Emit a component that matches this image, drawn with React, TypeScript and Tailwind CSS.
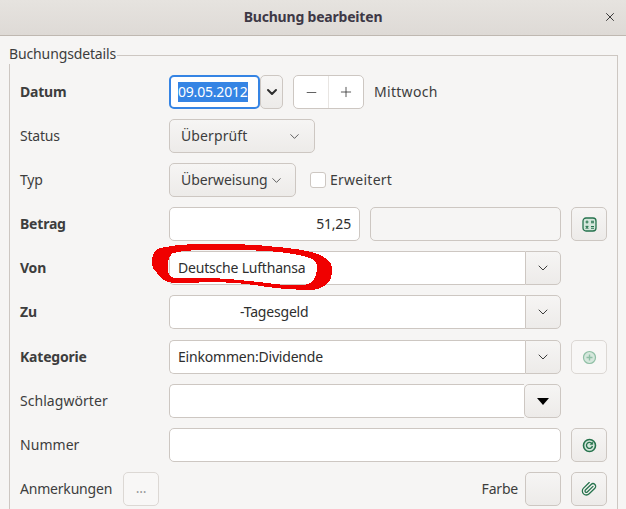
import { ChevronDown, Minus, Plus, X, Paperclip } from 'lucide-react'
import type { ReactNode } from 'react'

const btnBase = "flex items-center h-[34px] rounded-[5px] border border-[#cdc7c2] bg-gradient-to-b from-[#f6f5f4] to-[#edebe9] shrink-0"
const btn = `${btnBase} justify-center`
const entry = "flex items-center h-[34px] rounded-[5px] border border-[#cdc7c2] bg-white text-[#2e2e2e] px-2 pb-[2px]"

function Row({ label, bold, wide, children, className = "" }: { label: string; bold?: boolean; wide?: boolean; children: ReactNode; className?: string }) {
  return (
    <div className={`flex items-center h-[34px] ${className}`}>
      <span className={`w-[149px] shrink-0 pb-[2px] text-[#3d3d3d] ${bold ? "font-bold" : ""} ${wide ? "tracking-[0.05px]" : ""}`}>{label}</span>
      {children}
    </div>
  )
}

function Combo({ text, indent }: { text?: string; indent?: boolean }) {
  return (
    <div className="flex h-[34px] w-[392px] shrink-0">
      <div className={`flex items-center flex-1 pb-[2px] rounded-l-[5px] border border-r-0 border-[#cdc7c2] bg-white text-[#2e2e2e] ${indent ? "pl-[70px]" : "pl-2"}`}>
        {text}
      </div>
      <div className="flex items-center justify-center w-[36px] rounded-r-[5px] border border-[#cdc7c2] bg-gradient-to-b from-[#f6f5f4] to-[#edebe9]">
        <ChevronDown size={16} strokeWidth={1.4} className="text-[#2e2e2e]" />
      </div>
    </div>
  )
}

export default function App() {
  return (
    <div className="h-[509px] w-[626px] overflow-hidden relative bg-[#f6f5f4] text-[14px] font-['Noto_Sans',sans-serif] tracking-[-0.2px]">
      {/* titlebar */}
      <div className="relative flex items-center justify-center h-[36px] pb-[2px] border-b border-[#bfb8b1] bg-gradient-to-b from-[#e6e3df] to-[#dedad6]">
        <span className="font-bold text-[#3d3846]">Buchung bearbeiten</span>
        <X size={14} strokeWidth={1.6} className="absolute right-[9px] top-[10px] text-[#2e2e2e]" />
      </div>

      {/* frame */}
      <div className="relative mt-[19px] ml-[9px] w-[609px] h-[470px] border border-b-0 border-[#cdc7c2] pl-[10px] pt-[19px] pr-[10px]">
        <span className="absolute -left-px -top-[12px] bg-[#f6f5f4] leading-[20px] text-[#3d3d3d] pr-px tracking-[-0.13px]">Buchungsdetails</span>

        <div className="flex flex-col gap-[10px]">
          <Row label="Datum" bold>
            <div className="flex items-center h-[34px] w-[91px] rounded-[5px] border-2 border-[#3584e4] bg-white pl-[7px]">
              <span className="bg-[#3584e4] text-white leading-[20px]">09.05.2012</span>
            </div>
            <div className={`${btn} w-[23px]`}>
              <ChevronDown size={16} strokeWidth={3} className="text-[#2e2e2e]" />
            </div>
            <div className="flex h-[34px] w-[71px] ml-[10px] rounded-[5px] border border-[#cdc7c2] bg-white">
              <div className="flex flex-1 items-center justify-center border-r border-[#e8e5e2]"><Minus size={15} strokeWidth={1.2} className="text-[#2e2e2e]" /></div>
              <div className="flex flex-1 items-center justify-center"><Plus size={16} strokeWidth={1.2} className="text-[#2e2e2e]" /></div>
            </div>
            <span className="ml-[10px] pb-[2px] text-[#3d3d3d] tracking-[0.3px]">Mittwoch</span>
          </Row>

          <Row label="Status">
            <div className={`${btnBase} w-[146px] justify-between pl-[11px] pr-[12px] text-[#3d3d3d]`}>
              <span className="pb-[2px] tracking-[0.1px]">Überprüft</span> <ChevronDown size={15} strokeWidth={1.3} />
            </div>
          </Row>

          <Row label="Typ">
            <div className={`${btnBase} w-[127px] justify-between pl-[11px] pr-[11px] text-[#3d3d3d]`}>
              <span className="pb-[2px] -tracking-[0.1px]">Überweisung</span> <ChevronDown size={15} strokeWidth={1.3} />
            </div>
            <div className="ml-[14px] h-[16px] w-[16px] rounded-[3px] border border-[#cdc7c2] bg-white" />
            <span className="ml-[4px] pb-[2px] text-[#3d3d3d] tracking-[0.25px]">Erweitert</span>
          </Row>

          <Row label="Betrag" bold>
            <div className={`${entry} w-[191px] justify-end`}>51,25</div>
            <div className="ml-[10px] h-[34px] w-[191px] rounded-[5px] border border-[#cdc7c2] bg-[#f6f5f4]" />
            <div className={`${btn} w-[36px] ml-[10px]`}>
              <svg width="15" height="15" viewBox="0 0 15 15" fill="none" stroke="#26734d">
                <rect x="1" y="1" width="13" height="13" rx="3" strokeWidth="1.3" fill="#d5e7dc" />
                <path d="M3.5 5h3M5 3.5v3M9 4.2h3M9 5.8h3M3.7 9l2.6 2.6M6.3 9l-2.6 2.6M9 9.5h3M9 11.2h3" strokeWidth="1.1" />
              </svg>
            </div>
          </Row>

          <Row label="Von" bold><Combo text="Deutsche Lufthansa" /></Row>
          <Row label="Zu" bold><Combo text="-Tagesgeld" indent /></Row>

          <Row label="Kategorie" bold className="mt-px">
            <Combo text="Einkommen:Dividende" />
            <div className="flex items-center justify-center h-[34px] w-[36px] ml-[10px] shrink-0 rounded-[5px] border border-[#dcd8d4] bg-[#f8f7f6]">
              <svg width="15" height="15" viewBox="0 0 15 15" fill="#d5e7dc" stroke="#8fbfa5">
                <circle cx="7.5" cy="7.5" r="6" strokeWidth="1.2" />
                <path d="M7.5 4.5v6M4.5 7.5h6" strokeWidth="1.4" />
              </svg>
            </div>
          </Row>

          <Row label="Schlagwörter" wide>
            <div className="flex h-[34px] w-[392px] shrink-0">
              <div className="flex-1 rounded-l-[5px] border border-r-0 border-[#cdc7c2] bg-white" />
              <div className="flex items-center justify-center w-[37px] rounded-[5px] border border-[#cdc7c2] bg-gradient-to-b from-[#f6f5f4] to-[#edebe9]">
                <svg width="12" height="7" viewBox="0 0 12 7"><path d="M0 0h12L6 7z" fill="#000" /></svg>
              </div>
            </div>
          </Row>

          <Row label="Nummer" wide>
            <div className={`${entry} w-[392px]`} />
            <div className={`${btn} w-[36px] ml-[10px]`}>
              <svg width="15" height="15" viewBox="0 0 15 15" fill="none" stroke="#26734d">
                <circle cx="7.5" cy="7.5" r="6" strokeWidth="1.6" fill="#d5e7dc" />
                <path d="M10 5.8a3 3 0 1 0 .4 2.2" strokeWidth="1.4" />
                <path d="M10.8 3.8v2.8H8z" fill="#26734d" strokeWidth="0.4" />
              </svg>
            </div>
          </Row>

          <div className="flex items-center h-[34px]">
            <span className="w-[103px] shrink-0 pb-[2px] text-[#3d3d3d]">Anmerkungen</span>
            <div className="flex items-center justify-center h-[34px] w-[36px] shrink-0 rounded-[5px] border border-[#dcd8d4] bg-[#f8f7f6] text-[#999] pb-1">...</div>
            <span className="ml-auto mr-[7px] pb-[2px] text-[#3d3d3d]">Farbe</span>
            <div className={`${btn} w-[36px]`} />
            <div className={`${btn} w-[36px] ml-[10px]`}>
              <Paperclip size={16} strokeWidth={1.9} className="text-[#26734d] -scale-x-100 rotate-90" />
            </div>
          </div>
        </div>
      </div>

      {/* red hand-drawn marker over the screenshot */}
      <svg className="absolute left-0 top-0 pointer-events-none" width="626" height="509" viewBox="0 0 626 509" shapeRendering="crispEdges">
        <path
          fillRule="evenodd"
          fill="#f00000"
          d="M152 263C152 254 155 250 160 248C178 244 195 244 213 244C232 244 250 244 267 246C290 248 310 250 320 255C328 259 332 263 332 268C332 275 331 280 328 283C323 288 317 290 310 290C295 290 282 289 267 287C250 284 232 282 213 282C198 282 185 284 173 283C165 282 160 278 157 273C154 270 152 267 152 263Z M168 263C168 268 168 270 168 272C169 276 172 278 177 278C190 278 200 277 213 278C232 279 250 281 267 283C280 285 295 286 305 285C313 284 317 276 317 268C317 263 315 260 310 258C298 254 282 252 267 251C250 250 232 250 213 250C198 250 185 250 173 253C170 255 168 259 168 263Z"
        />
      </svg>
    </div>
  )
}
